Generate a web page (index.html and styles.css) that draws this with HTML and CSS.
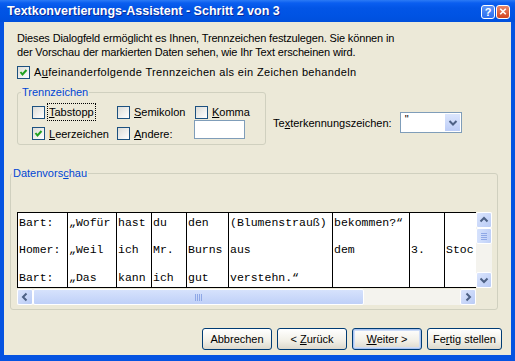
FILE: index.html
```html
<!DOCTYPE html>
<html lang="de">
<head>
    <meta charset="UTF-8">
    <title>Textkonvertierungs-Assistent</title>
    <link rel="stylesheet" href="styles.css">
</head>
<body>
<div class="window">
    <div class="titlebar">
        <span class="title">Textkonvertierungs-Assistent - Schritt 2 von 3</span>
        <div class="caption">
            <span class="cap-btn help">?</span>
            <span class="cap-btn close"><svg width="13" height="13" viewBox="0 0 13 13"><path d="M3.5 3.5 L9.5 9.5 M9.5 3.5 L3.5 9.5" stroke="#fff" stroke-width="1.8"/></svg></span>
        </div>
    </div>
    <div class="client">
        <p class="intro">Dieses Dialogfeld ermöglicht es Ihnen, Trennzeichen festzulegen. Sie können in<br>der Vorschau der markierten Daten sehen, wie Ihr Text erscheinen wird.</p>
        <div class="check consecutive"><span class="box on"></span>A<u>u</u>feinanderfolgende Trennzeichen als ein Zeichen behandeln</div>

        <div class="options">
            <fieldset class="group delims">
                <legend>Trennzeichen</legend>
                <div class="delim-grid">
                    <div class="check"><span class="box"></span><span class="focus"><u>T</u>abstopp</span></div>
                    <div class="check"><span class="box"></span><u>S</u>emikolon</div>
                    <div class="check"><span class="box"></span><u>K</u>omma</div>
                    <div class="check"><span class="box on"></span><u>L</u>eerzeichen</div>
                    <div class="check"><span class="box"></span><u>A</u>ndere:</div>
                    <div class="edit"></div>
                </div>
            </fieldset>
            <div class="qualifier">
                <span>Te<u>x</u>terkennungszeichen:</span>
                <div class="combo">
                    <span class="combo-val">"</span>
                    <span class="combo-btn"><svg width="16" height="17" viewBox="0 0 16 17"><path d="M4.5 7 L8 10.5 L11.5 7" fill="none" stroke="#4d6185" stroke-width="2"/></svg></span>
                </div>
            </div>
        </div>

        <fieldset class="group preview">
            <legend>Datenvors<u>c</u>hau</legend>
            <div class="grid-view">
                <div class="viewport">
                    <div class="col"><span>Bart:</span><span>Homer:</span><span>Bart:</span></div>
                    <div class="col"><span>„Wofür</span><span>„Weil</span><span>„Das</span></div>
                    <div class="col"><span>hast</span><span>ich</span><span>kann</span></div>
                    <div class="col"><span>du</span><span>Mr.</span><span>ich</span></div>
                    <div class="col"><span>den</span><span>Burns</span><span>gut</span></div>
                    <div class="col"><span>(Blumenstrauß)</span><span>aus</span><span>verstehn.“</span></div>
                    <div class="col"><span>bekommen?“</span><span>dem</span><span></span></div>
                    <div class="col"><span></span><span>3.</span><span></span></div>
                    <div class="col"><span></span><span>Stoc</span><span></span></div>
                </div>
                <div class="vscroll">
                    <span class="sb-btn"><svg width="16" height="16" viewBox="0 0 16 16"><path d="M4.5 9.5 L8 6 L11.5 9.5" fill="none" stroke="#4d6185" stroke-width="2"/></svg></span>
                    <span class="sb-thumb v"></span>
                    <span class="sb-track"></span>
                    <span class="sb-btn"><svg width="16" height="16" viewBox="0 0 16 16"><path d="M4.5 6.5 L8 10 L11.5 6.5" fill="none" stroke="#4d6185" stroke-width="2"/></svg></span>
                </div>
                <div class="hscroll">
                    <span class="sb-btn"><svg width="16" height="16" viewBox="0 0 16 16"><path d="M9.5 4.5 L6 8 L9.5 11.5" fill="none" stroke="#4d6185" stroke-width="2"/></svg></span>
                    <span class="sb-thumb h"></span>
                    <span class="sb-track"></span>
                    <span class="sb-btn"><svg width="16" height="16" viewBox="0 0 16 16"><path d="M6.5 4.5 L10 8 L6.5 11.5" fill="none" stroke="#4d6185" stroke-width="2"/></svg></span>
                </div>
            </div>
        </fieldset>

        <div class="buttons">
            <button class="btn">Abbrechen</button>
            <button class="btn">&lt; <u>Z</u>urück</button>
            <button class="btn default"><u>W</u>eiter &gt;</button>
            <button class="btn wide">Fe<u>r</u>tig stellen</button>
        </div>
    </div>
</div>
</body>
</html>
```

FILE: styles.css
```css
*{
    box-sizing: border-box;
}

body{
    margin: 0;
    font-family: "Liberation Sans", Arial, sans-serif;
    font-size: 11px;
    color: #000;
}

.window{
    width: 515px;
    height: 361px;
    background: #0553e1;
    display: flex;
    flex-direction: column;
}

/* title bar */
.titlebar{
    height: 22px;
    display: flex;
    align-items: center;
    padding: 0 5px 0 7px;
    background: linear-gradient(#2b7af5 0, #0a5ef0 3px, #0255e6 8px, #0053e3 16px, #0050dc 22px);
}
.title{
    flex: 1;
    color: #fff;
    font-weight: bold;
    font-size: 12.5px;
    text-shadow: 1px 1px #0a2a9a;
}
.caption{
    display: flex;
    gap: 1px;
    margin-top: 1px;
}
.cap-btn{
    width: 14px;
    height: 14px;
    border: 1px solid #fff;
    border-radius: 3px;
    display: flex;
    align-items: center;
    justify-content: center;
    color: #fff;
    font-weight: bold;
    font-size: 11px;
}
.cap-btn.help{
    background: linear-gradient(#5b93f7, #2a6ef0);
}
.cap-btn.close{
    background: linear-gradient(#e8876a, #d2441f);
}

/* client area */
.client{
    flex: 1;
    margin: 0 4px 6px 4px;
    background: #ece9d8;
    padding: 9px 9px 0 6px;
    display: flex;
    flex-direction: column;
}
.intro{
    margin: 0 0 0 7px;
    line-height: 14px;
    letter-spacing: -0.15px;
}
.check{
    display: flex;
    align-items: center;
    height: 14px;
    line-height: 14px;
    white-space: nowrap;
}
.check.consecutive{
    margin: 6px 0 0 7px;
    letter-spacing: 0.35px;
}
.box{
    width: 13px;
    height: 13px;
    border: 1px solid #1c5180;
    background: linear-gradient(135deg, #dcdcd7, #fff);
    margin-right: 4px;
    flex: none;
}
.box.on{
    background: url("data:image/svg+xml,%3Csvg xmlns='http://www.w3.org/2000/svg' width='11' height='11'%3E%3Cpath d='M2.5 5 L4.5 7.5 L8.5 3' fill='none' stroke='%2321a121' stroke-width='2'/%3E%3C/svg%3E") no-repeat, linear-gradient(135deg, #dcdcd7, #fff);
}
.focus{
    outline: 1px dotted #000;
    outline-offset: 1px;
}

/* groups */
.group{
    margin: 0;
    padding: 0;
    border: 1px solid #d0d0bf;
    border-radius: 3px;
}
.group legend{
    color: #0046d5;
    padding: 0 1px;
    margin-left: 3px;
    line-height: 14px;
}

.options{
    display: flex;
    margin: 6px 0 0 7px;
}
.delims{
    width: 249px;
}
.delim-grid{
    display: grid;
    grid-template-columns: 85px 78px auto;
    grid-template-rows: 22px 21px;
    align-items: center;
    margin: 2px 0 0 14px;
}
.edit{
    width: 51px;
    height: 19px;
    border: 1px solid #7f9db9;
    background: #fff;
    align-self: start;
    margin: -3px 0 0 -1px;
}

.qualifier{
    display: flex;
    align-items: center;
    gap: 8px;
    margin: 27px 0 0 7px;
    align-self: flex-start;
}
.combo{
    width: 62px;
    height: 21px;
    border: 1px solid #7f9db9;
    background: #fff;
    display: flex;
    justify-content: space-between;
}
.combo-val{
    padding: 0 0 0 4px;
    line-height: 12px;
}
.combo-btn{
    width: 17px;
    background: linear-gradient(#dce6fd, #bccdf7);
    border: 1px solid #fff;
}

/* preview */
.preview{
    width: 488px;
    margin-top: 21px;
}
.preview legend{
    margin-left: 1px;
}
.grid-view{
    display: grid;
    grid-template-columns: 459px 16px;
    grid-template-rows: 76px 16px;
    row-gap: 1px;
    margin: 32px 0 4px 6px;
}
.viewport{
    overflow: hidden;
    display: flex;
    background: #fff;
    border-top: 1px solid #000;
    border-bottom: 1px solid #000;
    font-family: "Liberation Mono", "Courier New", monospace;
    font-size: 11.5px;
}
.col{
    flex: none;
    border-left: 1px solid #000;
    padding: 3px 0 0 1px;
    white-space: nowrap;
}
.col span{
    display: block;
    height: 27px;
    line-height: 14px;
}
.col span:nth-child(2){
    height: 28px;
}
.col:nth-child(1){ width: 50px; }
.col:nth-child(2){ width: 49px; }
.col:nth-child(3){ width: 35px; }
.col:nth-child(4){ width: 35px; }
.col:nth-child(5){ width: 42px; }
.col:nth-child(6){ width: 104px; }
.col:nth-child(7){ width: 77px; }
.col:nth-child(8){ width: 35px; }
.col:nth-child(9){ width: 60px; }

.vscroll, .hscroll{
    display: flex;
    background: #f4f3ee;
}
.vscroll{
    flex-direction: column;
}
.hscroll{
    grid-column: 1;
}
.sb-btn{
    width: 16px;
    height: 16px;
    flex: none;
    border: 1px solid #fff;
    border-radius: 2px;
    background: linear-gradient(135deg, #dbe5fd, #b9cbf5);
    display: block;
}
.sb-btn svg{
    display: block;
    margin: -1px;
}
.sb-thumb{
    border: 1px solid #fff;
    border-radius: 2px;
    background: linear-gradient(135deg, #d6e2fc, #bfd0f8);
    flex: none;
}
.sb-thumb.v{
    height: 16px;
    background: repeating-linear-gradient(#8fa8e6 0 1px, transparent 1px 2px) 4px 4px / 6px 7px no-repeat, linear-gradient(90deg, #d6e2fc, #bfd0f8);
}
.sb-thumb.h{
    width: 331px;
    background: repeating-linear-gradient(90deg, #8fa8e6 0 1px, transparent 1px 2px) 161px 4px / 7px 7px no-repeat, linear-gradient(#d6e2fc, #bfd0f8);
}
.sb-track{
    flex: 1;
}

/* buttons */
.buttons{
    display: flex;
    justify-content: flex-end;
    gap: 5px;
    margin-top: 18px;
}
.btn{
    width: 70px;
    height: 22px;
    border: 1px solid #003c74;
    border-radius: 3px;
    background: linear-gradient(#fff, #f1efe6 60%, #dcd8cc);
    font-family: "Liberation Sans", Arial, sans-serif;
    font-size: 11px;
    color: #000;
    padding: 0;
}
.btn.default{
    box-shadow: inset 0 0 0 1px #a9c3f0, inset 0 0 0 2px #cddcf7;
}
.btn.wide{
    width: 75px;
}
```
